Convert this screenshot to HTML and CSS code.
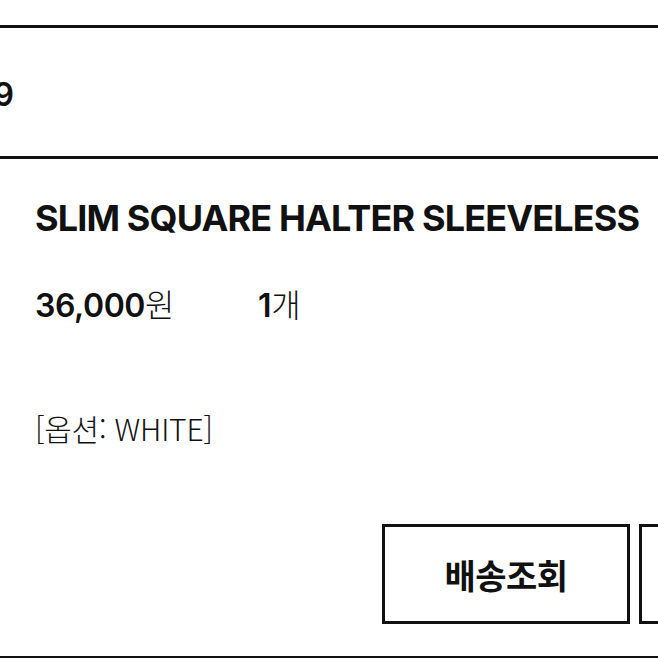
FILE: index.html
```html
<!DOCTYPE html>
<html lang="ko">

<head>
    <meta charset="UTF-8">
    <meta name="viewport" content="width=device-width, initial-scale=1.0">
    <title>주문내역</title>
    <link rel="stylesheet" href="styles.css">
</head>

<body>
    <div class="order">
        <div class="order-head">
            <div class="order-no">
                <span>20240119</span>
            </div>
        </div>
        <div class="order-item">
            <h2 class="item-name">SLIM SQUARE HALTER SLEEVELESS</h2>
            <div class="item-meta">
                <span class="price">36,000<span class="unit">원</span></span>
                <span class="qty">1<span class="unit">개</span></span>
            </div>
            <p class="item-option">[옵션: WHITE]</p>
            <div class="item-actions">
                <button class="action-button" type="button">배송조회</button>
                <button class="action-button" type="button">구매확정</button>
            </div>
        </div>
    </div>
</body>

</html>
```

FILE: styles.css
```css
body {
    font-family: Inter, "Noto Sans CJK KR", sans-serif;
    margin: 0;
    padding: 0;
    color: #111;
    background: #fff;
    overflow: hidden;
}

.order {
    margin-top: 25px;
    width: 1000px;
    border-top: 3px solid #111;
    border-bottom: 4px solid #111;
}

.order-head {
    height: 128px;
    display: flex;
    align-items: center;
    border-bottom: 3px solid #111;
}

/* only the tail of the order number fits on screen */
.order-no {
    width: 14px;
    display: flex;
    justify-content: flex-end;
    overflow: hidden;
    white-space: nowrap;
    font-size: 32px;
    font-weight: 600;
    padding-top: 4px;
}

.order-item {
    padding: 36px 0 32px 35px;
}

.item-name {
    margin: 0;
    font-size: 36px;
    font-weight: 700;
    letter-spacing: -0.85px;
    line-height: 46px;
}

.item-meta {
    display: flex;
    margin-top: 40px;
    font-size: 32px;
    font-weight: 600;
    letter-spacing: -0.4px;
    line-height: 44px;
}

.price {
    width: 223px;
}

.unit {
    font-family: "Noto Sans CJK KR", sans-serif;
    font-weight: 300;
}

.item-option {
    margin: 78px 0 0 0;
    font-family: "Noto Sans CJK KR", sans-serif;
    font-size: 30px;
    font-weight: 300;
    letter-spacing: -0.2px;
    line-height: 44px;
}

.item-actions {
    display: flex;
    gap: 9px;
    margin-top: 74px;
    padding-left: 347px;
}

.action-button {
    width: 248px;
    height: 100px;
    border: 3px solid #111;
    background: #fff;
    color: #111;
    font-family: "Noto Sans CJK KR", sans-serif;
    font-size: 34px;
    font-weight: 700;
    letter-spacing: -0.5px;
}
```
